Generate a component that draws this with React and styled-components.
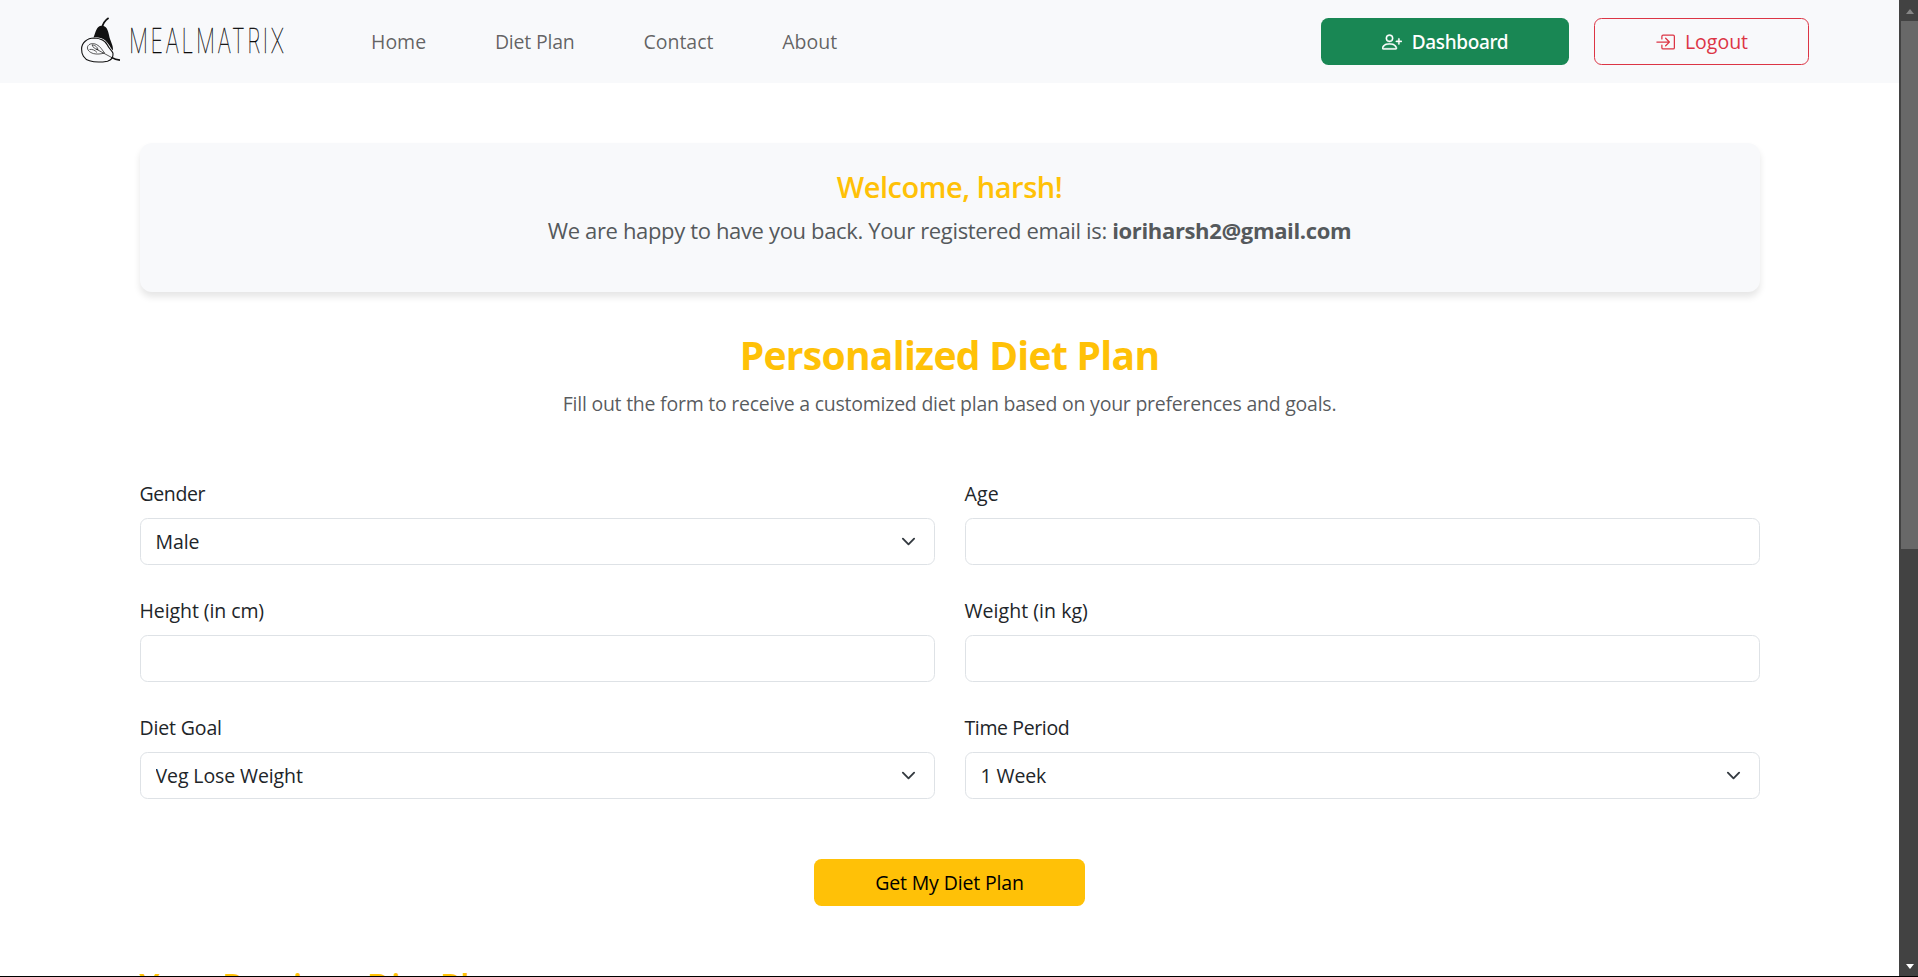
import React from 'react';
import styled, { createGlobalStyle } from 'styled-components';
import { BsPersonPlus, BsBoxArrowInRight } from 'react-icons/bs';

const GlobalStyle = createGlobalStyle`
  *, *::before, *::after { box-sizing: border-box; }
  body {
    margin: 0;
    background: #fff;
    color: #212529;
    font-family: "Open Sans", "Noto Sans", sans-serif;
    font-size: 19.5px;
    line-height: 30px;
    overflow: hidden;
  }
  h1, h2, h3, p { margin: 0; }
`;

const Screen = styled.div`
  display: grid;
  grid-template-columns: minmax(0, 1fr) 19px;
  height: 977px;
  border-bottom: 1px solid #000;
  overflow: hidden;
`;

const Page = styled.div`
  height: 976px;
  overflow: hidden;
`;

const Navbar = styled.header`
  display: flex;
  align-items: center;
  height: 83px;
  padding: 0 90px 0 74px;
  background: #f8f9fb;
`;

const Brand = styled.a`
  display: block;
  width: 297px;
  height: 59px;
  svg { display: block; overflow: visible; }
`;

const NavLinks = styled.nav`
  display: flex;
  gap: 68.8px;
  flex: 1;
`;

const NavLink = styled.a`
  color: rgba(0, 0, 0, 0.62);
  letter-spacing: ${(p) => p.$tracking || 0}px;
  padding-top: 1px;
`;

const Actions = styled.div`
  display: flex;
  gap: 25px;
`;

const Button = styled.button`
  display: flex;
  align-items: center;
  justify-content: center;
  gap: 10px;
  height: 47px;
  padding: 0;
  border: 1px solid transparent;
  border-radius: 7.5px;
  font: inherit;
  white-space: nowrap;
  svg { width: 20px; height: 20px; display: block; }
`;

const DashboardButton = styled(Button)`
  width: 248px;
  background: #198754;
  color: #fff;
  font-family: "Noto Sans", sans-serif;
  font-size: 19px;
  font-weight: 500;
  letter-spacing: -0.35px;
  svg { stroke: currentColor; stroke-width: 0.3; }
`;

const LogoutButton = styled(Button)`
  width: 215px;
  background: transparent;
  border-color: #dc3545;
  color: #dc3545;
`;

const SubmitButton = styled(Button)`
  width: 271px;
  margin: 59px auto 0;
  background: #ffc107;
  color: #000;
  letter-spacing: -0.15px;
`;

const Container = styled.main`
  width: 1620px;
  margin: 0 auto;
  padding-top: 60px;
`;

const WelcomeCard = styled.section`
  height: 149px;
  padding-top: 26px;
  background: #f8f9fb;
  border-radius: 12px;
  box-shadow: 0 5px 7.5px rgba(0, 0, 0, 0.1);
  text-align: center;
`;

const WelcomeTitle = styled.h3`
  font-size: 29px;
  font-weight: 600;
  line-height: 36px;
  letter-spacing: -0.45px;
  color: #ffc107;
`;

const WelcomeText = styled.p`
  margin-top: 9px;
  font-size: 22px;
  line-height: 33px;
  letter-spacing: -0.35px;
  color: #55595c;
`;

const PageTitle = styled.h1`
  margin-top: 39px;
  font-size: 39px;
  font-weight: 700;
  line-height: 48px;
  letter-spacing: -0.7px;
  text-align: center;
  color: #ffc107;
`;

const Lead = styled.p`
  margin-top: 10px;
  letter-spacing: -0.24px;
  text-align: center;
  color: rgba(33, 37, 41, 0.75);
`;

const Form = styled.form`
  display: grid;
  grid-template-columns: 1fr 1fr;
  gap: 30px;
  margin-top: 60px;
`;

const Field = styled.label`
  display: flex;
  flex-direction: column;
  gap: 9px;
  letter-spacing: ${(p) => p.$tracking || 0}px;
`;

const Control = styled.div`
  position: relative;
  height: 47px;
  margin-bottom: 1px;
  svg {
    position: absolute;
    right: 18.5px;
    top: 15.5px;
    width: 15px;
    height: 15px;
    pointer-events: none;
  }
`;

const Input = styled.input`
  display: block;
  width: 100%;
  height: 47px;
  padding: 0 15px;
  border: 1px solid #dee2e6;
  border-radius: 7.5px;
  background: #fff;
  color: #212529;
  font: inherit;
  letter-spacing: -0.1px;
  outline: none;
`;

const Select = styled(Input).attrs({ as: 'select' })`
  appearance: none;
`;

const SectionTitle = styled.h2`
  margin-top: 59px;
  font-size: 34px;
  font-weight: 600;
  line-height: 42px;
  letter-spacing: -0.65px;
  color: #ffc107;
`;

const Scrollbar = styled.aside`
  display: flex;
  flex-direction: column;
  align-items: center;
  height: 976px;
  padding: 9px 0 7px 2px;
  background: #424242;
`;

const Arrow = styled.i`
  border: 4.5px solid transparent;
  border-width: ${(p) => (p.$up ? '0 4.5px 5px' : '5px 4.5px 0')};
  border-${(p) => (p.$up ? 'bottom' : 'top')}-color: ${(p) => (p.$up ? '#868686' : '#fff')};
`;

const Thumb = styled.div`
  width: 17px;
  height: 528px;
  margin: 7px 0 auto;
  background: #686868;
`;

const Logo = () => (
  <svg width="240" height="59" viewBox="0 0 240 59" role="img" aria-label="MealMatrix">
    <path d="M28 16 C29 11 31.5 8 34.6 6" fill="none" stroke="#111" strokeWidth="1.7" />
    <path d="M19.6 25.2 C22 20 22 14.8 27 13.8 C32 13.2 33.8 17 35 23 C36 29 39.4 33 39 38.5 C36 35.5 33.6 28.2 27.5 26.2 C25 25.3 22 25 19.6 25.2Z" fill="#111" />
    <path d="M7.6 37 C7.6 31 13 26 20 26 C27 26.3 31 28 33.4 33 C35 37 38.6 38.5 39 41.5 C39.3 45 37.5 48 33.5 49.2 C28 50.2 20 50.2 15.5 48.8 C10 47.2 7.4 42 7.6 37Z" fill="#f8f9fb" stroke="#111" strokeWidth="1.1" />
    <path d="M13.5 34.8 C15 31.2 19 31 22.5 32.5 C26.5 34.4 28.5 38.5 30.5 41 C27 42 23 42.5 19.5 41.6 C15.5 40.4 13 38 13.5 34.8Z M18 32.8 C19 35.5 21 37.2 24 37.6 C23.5 35.5 22 33.5 18 32.8Z M15.5 37.5 C18 37 21 38 23 40.5 M22 37 L38.6 46" fill="none" stroke="#111" strokeWidth="0.7" />
    <path d="M37.5 45.4 C40 47 43 48 46 48.2" fill="none" stroke="#111" strokeWidth="1.7" />
    <text
      transform="translate(55 40.5) scale(0.605 1)"
      fontFamily="Inter, sans-serif"
      fontSize="34.3"
      fontWeight="100"
      letterSpacing="4"
      fill="#000"
      stroke="#000"
      strokeWidth="0.3"
      textLength="260"
      lengthAdjust="spacingAndGlyphs"
    >
      MEALMATRIX
    </text>
  </svg>
);

const Chevron = () => (
  <svg viewBox="0 0 16 16" aria-hidden="true">
    <path d="m2 5 6 6 6-6" fill="none" stroke="#343a40" strokeWidth="2" strokeLinecap="round" strokeLinejoin="round" />
  </svg>
);

const SelectField = ({ label, value, tracking }) => (
  <Field $tracking={tracking}>
    {label}
    <Control>
      <Select defaultValue={value}>
        <option>{value}</option>
      </Select>
      <Chevron />
    </Control>
  </Field>
);

const InputField = ({ label, tracking }) => (
  <Field $tracking={tracking}>
    {label}
    <Control>
      <Input />
    </Control>
  </Field>
);

export default function App() {
  return (
    <>
      <GlobalStyle />
      <Screen>
        <Page>
          <Navbar>
            <Brand>
              <Logo />
            </Brand>
            <NavLinks>
              <NavLink>Home</NavLink>
              <NavLink $tracking={-0.2}>Diet Plan</NavLink>
              <NavLink>Contact</NavLink>
              <NavLink>About</NavLink>
            </NavLinks>
            <Actions>
              <DashboardButton>
                <BsPersonPlus />
                Dashboard
              </DashboardButton>
              <LogoutButton>
                <BsBoxArrowInRight />
                Logout
              </LogoutButton>
            </Actions>
          </Navbar>
          <Container>
            <WelcomeCard>
              <WelcomeTitle>Welcome, harsh!</WelcomeTitle>
              <WelcomeText>
                We are happy to have you back. Your registered email is: <strong>ioriharsh2@gmail.com</strong>
              </WelcomeText>
            </WelcomeCard>
            <PageTitle>Personalized Diet Plan</PageTitle>
            <Lead>Fill out the form to receive a customized diet plan based on your preferences and goals.</Lead>
            <Form>
              <SelectField label="Gender" value="Male" tracking={-0.4} />
              <InputField label="Age" tracking={0.2} />
              <InputField label="Height (in cm)" tracking={-0.08} />
              <InputField label="Weight (in kg)" tracking={0.05} />
              <SelectField label="Diet Goal" value="Veg Lose Weight" tracking={-0.15} />
              <SelectField label="Time Period" value="1 Week" tracking={-0.38} />
            </Form>
            <SubmitButton>Get My Diet Plan</SubmitButton>
            <SectionTitle>Your Previous Diet Plans</SectionTitle>
          </Container>
        </Page>
        <Scrollbar>
          <Arrow $up />
          <Thumb />
          <Arrow />
        </Scrollbar>
      </Screen>
    </>
  );
}
